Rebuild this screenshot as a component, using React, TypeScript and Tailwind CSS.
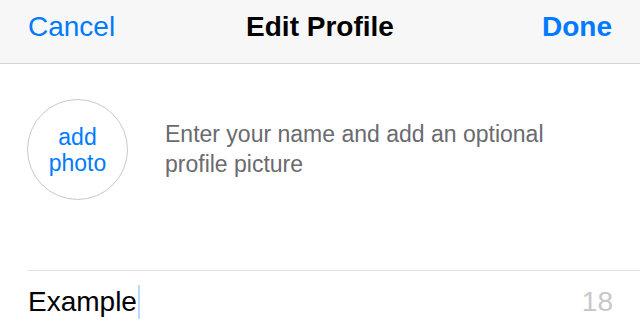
export default function App() {
  return (
    <div
      className="w-[640px] h-[332px] overflow-hidden bg-white"
      style={{ fontFamily: '"Liberation Sans", Arial, sans-serif' }}
    >
      <div className="h-[64px] bg-[#f7f7f7] border-b border-[#d4d4d4] grid grid-cols-[1fr_auto_1fr] items-start px-[28px] pt-[10px]">
        <span className="justify-self-start text-[28px] leading-[34px] text-[#007aff]">Cancel</span>
        <span className="text-[28px] leading-[34px] font-bold text-black">Edit Profile</span>
        <span className="justify-self-end text-[28px] leading-[34px] font-bold text-[#007aff]">Done</span>
      </div>
      <div className="flex items-center pl-[27px] pt-[35px]">
        <div className="w-[101px] h-[101px] rounded-full border border-[#c8c8cc] flex flex-col items-center justify-center text-[23px] leading-[26px] text-[#007aff]">
          <span>add</span>
          <span>photo</span>
        </div>
        <p className="ml-[37px] text-[23px] leading-[30px] text-[#6a6a6f] mb-[2px]">
          Enter your name and add an optional
          <br />
          profile picture
        </p>
      </div>
      <div className="ml-[28px] mt-[70px] border-t border-[#e0e0e0] flex items-center justify-between pr-[27px] h-[62px]">
        <div className="flex items-center">
          <span className="text-[28px] leading-[34px] text-black">Example</span>
          <span className="w-[2px] h-[34px] bg-[#b9d9ff] ml-[1px]" />
        </div>
        <span className="text-[28px] leading-[34px] text-[#c7c7cc]">18</span>
      </div>
    </div>
  );
}
